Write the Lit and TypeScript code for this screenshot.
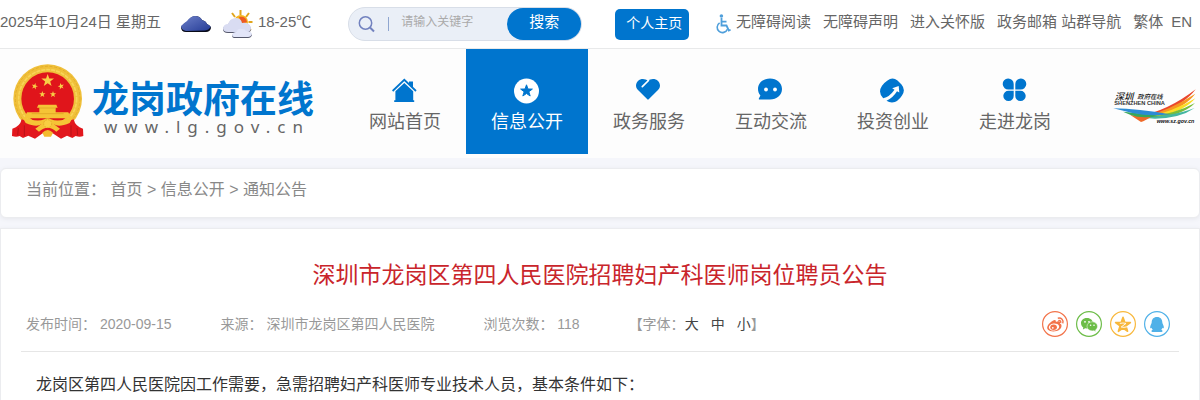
import { LitElement, html, svg, css } from "lit";
import { customElement, property } from "lit/decorators.js";

const STAR = "M0,-10 L2.4,-3.2 L9.5,-3.1 L3.8,1.2 L5.9,8.1 L0,4 L-5.9,8.1 L-3.8,1.2 L-9.5,-3.1 L-2.4,-3.2Z";

const NAV = [
  { label: "网站首页", icon: "home" },
  { label: "信息公开", icon: "star", active: true },
  { label: "政务服务", icon: "heart" },
  { label: "互动交流", icon: "chat" },
  { label: "投资创业", icon: "invest" },
  { label: "走进龙岗", icon: "clover" },
];

const NAV_ICONS: Record<string, unknown> = {
  home: svg`<path d="M.6 13 L12.3 1.8 L24 13" fill="none" stroke="#0075ce" stroke-width="1.8"/>
    <path d="M17 3.5h4v6.4l-4-3.8z M3.4 13.2 L12.3 4.9 L21.2 13.2 V22.2 H22.2 V24 H2.2 V22.2 H3.4Z" fill="#0075ce"/>`,
  star: svg`<circle cx="12.5" cy="13" r="12.5" fill="#fff"/>
    <path d=${STAR} transform="translate(12.5 13) scale(.62)" fill="#0075ce" stroke="#0075ce" stroke-width="1.6" stroke-linejoin="round"/>`,
  heart: svg`<path d="M11.9 2.9 C14.6 .3 19.3.2 22 2.9 C24.7 5.6 24.6 9.5 22 12.1 L12.7 21.3 Q12 22 11.3 21.3 L2 12.1 C-.6 9.5 -.7 5.6 2 2.9 C4.7.2 9.2.3 11.9 2.9Z" fill="#0075ce"/>
    <path d="M12.5 2.5 L6.3 8.6" stroke="#fff" stroke-width="1.7" stroke-linecap="round"/>`,
  chat: svg`<path d="M12 .5 C18.8 .5 24 4.9 24 11 C24 17.1 18.8 21.5 12 21.5 H1.6 Q.4 21.5 1 20.3 L2.4 17.5 C.8 15.7 0 13.5 0 11 C0 4.9 5.2 .5 12 .5Z" fill="#0075ce"/>
    <circle cx="8" cy="11.5" r="1.9" fill="#fff"/><circle cx="17" cy="11.5" r="1.9" fill="#fff"/>`,
  invest: svg`<path d="M7.5 2.5 Q12.5 -1.5 17.5 2.5 L21.5 6.5 Q26 12 22 17.5 Q18 24 12 24.5 Q9 24.5 6.5 22.7 Q13 19.7 17 13.2 L19.3 14.5 L18.7 8 L12.2 10.3 L14.5 11.7 Q9.4 19 3.2 20.2 Q-2.5 14.5 2 7.8 Q4 4.8 7.5 2.5Z" fill="#0075ce"/>`,
  clover: svg`<g fill="#0075ce"><path d="M11.7 11.5 H6.7 A5.5 5.5 0 1 1 11.7 6Z"/><path d="M13.3 11.5 H18.3 A5.5 5.5 0 1 0 13.3 6Z"/>
    <path d="M11.7 12.7 H6.7 A5.2 5.2 0 1 0 11.7 17.7Z"/><path d="M13.3 12.7 H18.3 A5.2 5.2 0 1 1 13.3 17.7Z"/></g>`,
};

const SHARES = [
  {
    name: "微博",
    color: "#f2734a",
    art: svg`<path d="M10.8 9.8 C12.6 8.2 14.4 8.8 13.8 11 C16.2 9.9 18.6 10.1 18 12.4 C20.2 13.2 20 16.5 17.6 18.6 C14.1 21.4 7.9 21.1 5.8 18.6 C4 16.3 6.4 12.5 10.8 9.8Z"/>
      <ellipse cx="12" cy="16" rx="5.2" ry="3.5" fill="#fff" transform="rotate(-8 12 16)"/>
      <ellipse cx="11.6" cy="16.2" rx="3.3" ry="2.7"/><circle cx="10.8" cy="16.8" r=".9" fill="#fff"/>
      <path d="M15.8 7.2 C19.4 6.4 21.8 9.2 20.8 12.4 M16.3 9.6 C18.2 9.2 19.2 10.3 18.6 12" fill="none" stroke="#f2734a" stroke-width="1.4"/>`,
  },
  {
    name: "微信",
    color: "#6dbd48",
    art: svg`<path d="M11 7 C6.7 7 5 9.7 5 12 C5 14.2 6 15.6 7.3 16.4 L6.9 18.4 L9.2 17.2 L11 17.4 C14.7 17.4 17 15 17 12.3 C17 9.5 14.6 7 11 7Z"/>
      <path d="M16.2 10.8 C13 10.8 11 12.9 11 15.3 C11 18 13.3 19.9 16.2 19.9 L18 19.7 L19.9 20.8 L19.5 19.1 C20.6 18.3 21.5 17 21.5 15.3 C21.5 12.8 19 10.8 16.2 10.8Z" stroke="#fff" stroke-width=".5"/>
      <g fill="#fff"><circle cx="9" cy="10.8" r=".9"/><circle cx="13" cy="10.8" r=".9"/><circle cx="14.6" cy="14.2" r=".8"/><circle cx="18" cy="14.2" r=".8"/></g>`,
  },
  {
    name: "QQ空间",
    color: "#f8b83c",
    art: svg`<path d=${STAR} transform="translate(13 14) scale(.78)" stroke="#f8b83c" stroke-width="2" stroke-linejoin="round"/>
      <path d="M9.8 12.4 Q13 11.6 16 12.4 L11.2 16 Q14 16.8 17 15.8" fill="none" stroke="#fff" stroke-width=".9"/>`,
  },
  {
    name: "QQ",
    color: "#50b1e8",
    art: svg`<path d="M13 6 C16.6 6 18.3 8.5 18.3 11.3 C18.3 12.4 19.5 14 19.8 15.8 C20 17.3 19.4 17.8 18.6 16.8 Q18.2 18 17.2 18.8 C19.2 19.6 18.9 21 17 21 H9 C7.1 21 6.8 19.6 8.8 18.8 Q7.8 18 7.4 16.8 C6.6 17.8 6 17.3 6.2 15.8 C6.5 14 7.7 12.4 7.7 11.3 C7.7 8.5 9.4 6 13 6Z"/>`,
  },
];

const base = css`
  * { box-sizing: border-box; }
  a { color: inherit; text-decoration: none; white-space: nowrap; }
  svg { display: block; flex: none; }
`;

@customElement("top-bar")
class TopBar extends LitElement {
  static styles = [base, css`
    :host { display: flex; align-items: center; height: 49px; padding-bottom: 4px; font-size: 15px; line-height: 24px; color: #666; background: #fff; border-bottom: 1px solid #e8e9ea; white-space: nowrap; }
    .weather { display: flex; align-items: center; margin-left: 19px; }
    .cloud { margin-top: 4px; }
    .sun { margin: 4px 4px 0 10px; }
    .search { display: flex; align-items: center; width: 234px; height: 34px; margin: 4px 33px 0 37px; border: 1px solid #d8dee8; border-radius: 17px; background: #eaeff7; }
    .search svg { margin-left: 8px; }
    .query { flex: 1; min-width: 0; margin: 0 0 4px; padding: 0 0 0 10px; border: 0; outline: 0; background: none; font: 400 12px/20px "Liberation Sans", "Noto Sans CJK SC", sans-serif; color: #666; }
    .query::placeholder { color: #aaa; opacity: 1; }
    .go { width: 74px; height: 32px; padding: 0 0 4px; border: 0; border-radius: 16px; background: #0075ce; color: #fff; font: 400 15px/20px "Liberation Sans", "Noto Sans CJK SC", sans-serif; }
    .mine { width: 74px; height: 31px; margin-top: 4px; padding-left: 4px; border-radius: 5px; background: #0075ce; color: #fff; font-size: 14px; line-height: 29px; text-align: center; }
    .links { display: flex; align-items: center; gap: 12px; margin-left: auto; padding-right: 8px; }
    .pair { display: flex; gap: 4px; }
    .langs { display: flex; align-items: baseline; gap: 8px; }
    .access { display: flex; align-items: center; gap: 5px; }
    .access svg { margin-top: 4px; }
  `];
  render() {
    return html`
      <span>2025年10月24日 星期五</span>
      <div class="weather">
        <svg class="cloud" width="32" height="18" viewBox="0 0 32 18">
          <defs><linearGradient id="n" x2="1" y2="1"><stop stop-color="#6d80c9"/><stop offset="1" stop-color="#253c96"/></linearGradient></defs>
          <path d="M6 17 Q1 17 1 12 Q4 8 7 7 Q11 1 15 1 Q20 1 22 5 Q26 6 27 9 Q31 11 31 13 Q30 17 26 17Z" fill="#080a18"/>
          <path d="M6 16 Q1 15 1 11 Q4 8 7 6 Q11 1 15 1 Q20 1 22 5 Q26 6 27 9 Q31 11 30.5 12 Q29 15 25 15.5Z" fill="url(#n)"/>
        </svg>
        <svg class="sun" width="32" height="28" viewBox="0 0 32 28">
          <g stroke="#e0a51d" stroke-width="2"><path d="M18.5 0v5M10 3l3 4M27 3l-3 4M30.5 12h-4M29 20l-4-3"/></g>
          <circle cx="19" cy="12" r="7" fill="#f6b51e"/><path d="M17 7 Q24 6 25 12 L20 14Z" fill="#ed5a23"/>
          <path d="M6 23 Q1 23 1 19 Q2 15 6 15 Q8 9 14 9 Q19 9 20 14 Q28 13 29 19 Q29 23 24 23Z" fill="#55586c"/>
          <path d="M6 22 Q1 22 1 18 Q2 14 6 14 Q8 8 14 8 Q19 8 20 13 Q28 12 29 18 Q29 22 24 22Z" fill="#d9dcf2"/>
          <path d="M12 28 Q9 27 11 24 Q13 23 14 23 Q16 19 20 20 Q23 20 24 22 Q29 22 30 25 Q29 28 26 28Z" fill="#55586c"/>
          <path d="M12 27 Q9 26 11 23 Q13 22 14 22 Q16 18 20 19 Q23 19 24 21 Q29 21 30 24 Q29 27 26 27Z" fill="#e2e5f8"/>
        </svg>
        <span>18-25℃</span>
      </div>
      <form class="search" @submit=${(e: Event) => e.preventDefault()}>
        <svg width="34" height="18" viewBox="0 0 34 18" fill="none" stroke="#7282bf">
          <circle cx="8.5" cy="8" r="6.2" stroke-width="1.5"/><path d="M13 12.5l4 4" stroke-width="2"/><path d="M31.5 2v14" stroke="#8fa6d0"/>
        </svg>
        <input class="query" type="text" aria-label="搜索关键字" placeholder="请输入关键字" />
        <button class="go" type="submit">搜索</button>
      </form>
      <a class="mine" href="#">个人主页</a>
      <nav class="links">
        <a class="access" href="#">
          <svg width="15" height="20" viewBox="0 0 15 20" fill="none" stroke="#4f9fdb" stroke-width="1.8">
            <circle cx="5.4" cy="2" r="1.8" fill="#4f9fdb" stroke="none"/><path d="M5.5 4v7.5h5l2.3 5 1.8-.8M5.5 7.6h5" /><path d="M3.6 8.8 A5.3 5.3 0 1 0 11.4 15.2" stroke-width="1.6"/>
          </svg>无障碍阅读</a>
        <a href="#">无障碍声明</a>
        <a href="#">进入关怀版</a>
        <span class="pair"><a href="#">政务邮箱</a><a href="#">站群导航</a></span>
        <span class="langs"><a href="#">繁体</a><a href="#">EN</a></span>
      </nav>`;
  }
}

@customElement("site-header")
class SiteHeader extends LitElement {
  static styles = [base, css`
    :host { display: flex; height: 109px; background: #fdfdfd; }
    .brand { display: flex; align-items: flex-start; width: 344px; padding: 11px 0 0 5px; flex: none; }
    .words { display: flex; flex-direction: column; margin-left: 2px; padding-top: 22px; }
    .name { font-size: 37px; font-weight: 700; line-height: 38px; color: #0075ce; white-space: nowrap; }
    .url { margin-left: 12px; font-family: "Noto Sans", sans-serif; font-size: 17px; line-height: 14px; letter-spacing: 7px; color: #666; }
    .nav { display: flex; flex: 0 1 732px; }
    .item { display: flex; flex: 1; flex-direction: column; align-items: center; height: 105px; padding-top: 29px; font-size: 18px; line-height: 26px; color: #666; }
    .item svg { margin-bottom: 4px; }
    .active { background: #0075ce; color: #fff; }
    .portal { margin: 26px 0 0 auto; }
    .portal text { font-family: "Liberation Sans", "Noto Sans CJK SC", sans-serif; }
  `];
  render() {
    return html`
      <a class="brand" href="#">
        <svg width="85" height="85" viewBox="0 0 255 255" role="img" aria-label="国徽">
          <circle cx="128" cy="116" r="103" fill="#f0c03a"/>
          <circle cx="128" cy="116" r="97" fill="none" stroke="#dba526" stroke-width="2" stroke-dasharray="9 5"/>
          <circle cx="128" cy="116" r="87" fill="none" stroke="#f8d458" stroke-width="5" stroke-dasharray="12 3"/>
          <circle cx="128" cy="116" r="79" fill="#e0151b"/>
          <g fill="#f8cf46"><path d=${STAR} transform="translate(128 62) scale(2)"/>
            <path d=${STAR} transform="translate(89 79) rotate(15)"/><path d=${STAR} transform="translate(168 79) rotate(-15)"/>
            <path d=${STAR} transform="translate(112 103)"/><path d=${STAR} transform="translate(144 103)"/></g>
          <path d="M100 134h54l4 9h-6v14h38l8 18H58l8-18h37v-14h-7z" fill="#f5c436"/>
          <path d="M102 144h50M80 161h96" stroke="#d99f20" stroke-width="2"/>
          <path d="M50 178 Q45 200 22 206 L21 228 Q34 232 44 228 L54 234 L70 227 L90 236 L113 220 H143 L168 236 L186 227 L202 234 L212 228 Q224 232 235 228 L234 206 Q211 200 206 178 Q170 190 128 190 Q86 190 50 178Z" fill="#e2171d"/>
          <path d="M50 168 Q92 189 118 178 Q128 172 138 178 Q164 189 206 168 L194 189 Q160 204 146 192 L165 206 L154 215 Q128 192 102 215 L91 206 L110 192 Q96 204 62 189Z" fill="#f5c436"/>
          <circle cx="128" cy="191" r="12" fill="#f8ce42" stroke="#d99f20" stroke-width="2" stroke-dasharray="5 3"/>
          <path d="M112 218q16-16 32 0l-6 12h-20z" fill="#f3bb2e"/>
          <path d="M40 204l-2 22M58 196v32M198 196v32M216 204l2 22" stroke="#b81218" stroke-width="3"/>
        </svg>
        <span class="words"><span class="name">龙岗政府在线</span><span class="url">www.lg.gov.cn</span></span>
      </a>
      <nav class="nav">
        ${NAV.map((n) => html`<a class="item ${n.active ? "active" : ""}" href="#">
          <svg width="26" height="27" viewBox="0 0 26 27">${NAV_ICONS[n.icon]}</svg>${n.label}</a>`)}
      </nav>
      <a class="portal" href="#">
        <svg width="100" height="60" viewBox="0 0 300 180" role="img" aria-label="深圳政府在线">
          <path d="M116 124 Q205 107 287 43 Q255 86 178 118 L120 134Z" fill="#e9472c"/>
          <path d="M120 130 Q215 103 286 56 Q258 94 185 120Z" fill="#f79722"/>
          <path d="M130 130 Q225 108 286 70 Q256 106 185 123Z" fill="#f9dd26"/>
          <path d="M130 130 Q225 117 285 84 Q252 118 180 128Z" fill="#77bd3c"/>
          <path d="M117 127 Q220 124 284 99 Q240 130 165 131Z" fill="#43b5a1"/>
          <path d="M91 120 Q121 124 160 122 Q135 137 123 141Z" fill="#ef6a29"/>
          <path d="M69 110 Q131 116 180 122 Q126 132 92 120Z" fill="#37a75b"/>
          <path d="M40 100 Q116 101 210 118 Q149 125 97 114Z" fill="#2c8bd5"/>
          <text x="44" y="74" font-size="28" font-style="italic" font-weight="500" fill="#171717">深圳</text>
          <text x="112" y="73" font-size="19" font-style="italic" font-weight="500" fill="#171717">政府在线</text>
          <text x="43" y="91" font-size="17" font-weight="700" fill="#333">SHENZHEN CHINA</text>
          <text x="170" y="144" font-size="16" font-weight="700" font-style="italic" fill="#111">www.sz.gov.cn</text>
        </svg>
      </a>`;
  }
}

@customElement("share-button")
class ShareButton extends LitElement {
  static styles = [base, css`
    :host { display: block; }
    .share { display: block; padding: 0; border: 0; background: none; }
  `];
  @property({ attribute: false }) item = SHARES[0];
  render() {
    return html`<button class="share" type="button" aria-label=${this.item.name}>
      <svg width="26" height="26" viewBox="0 0 26 26" fill=${this.item.color}>
        <circle cx="13" cy="13" r="12.4" fill="none" stroke=${this.item.color} stroke-width="1.2"/>${this.item.art}
      </svg></button>`;
  }
}

@customElement("app-root")
class AppRoot extends LitElement {
  static styles = [base, css`
    :host { display: block; height: 100vh; overflow: hidden; background: #f5f6fb; font-family: "Liberation Sans", "Noto Sans CJK SC", sans-serif; font-weight: 400; }
    .crumbs { margin-top: 10px; height: 50px; padding: 6px 25px; border: 1px solid #ebecef; border-radius: 6px; background: #fff; box-shadow: 0 1px 4px #e6e7ec; font-size: 16px; line-height: 30px; color: #888; white-space: nowrap; }
    .article { margin-top: 10px; padding: 28px 20px; border: 1px solid #ebecef; background: #fff; box-shadow: 0 1px 4px #e6e7ec; }
    .title { margin: 0; font-size: 23px; font-weight: 400; line-height: 36px; text-align: center; color: #c9252b; }
    .meta { display: flex; align-items: center; height: 59px; padding: 4px 9px 0 5px; border-bottom: 1px solid #e6e6e6; font-size: 14px; line-height: 20px; color: #999; white-space: nowrap; }
    .facts { display: flex; gap: 49px; }
    .sizes { display: flex; }
    .size { padding: 0; border: 0; background: none; font: inherit; color: #444; }
    .size + .size { margin-left: 12px; }
    .shares { display: flex; gap: 8px; margin-left: auto; }
    .text { margin: 20px 0 0 15px; font-size: 16px; line-height: 26px; color: #333; }
  `];
  render() {
    return html`
      <top-bar></top-bar>
      <site-header></site-header>
      <nav class="crumbs"><span>当前位置：</span> <a href="#">首页</a> &gt; <a href="#">信息公开</a> &gt; <a href="#">通知公告</a></nav>
      <main class="article">
        <h1 class="title">深圳市龙岗区第四人民医院招聘妇产科医师岗位聘员公告</h1>
        <div class="meta">
          <div class="facts">
            <span>发布时间： 2020-09-15</span>
            <span>来源： 深圳市龙岗区第四人民医院</span>
            <span>浏览次数： 118</span>
            <span class="sizes">【字体：<button class="size" type="button">大</button><button class="size" type="button">中</button><button class="size" type="button">小</button>】</span>
          </div>
          <div class="shares">${SHARES.map((s) => html`<share-button .item=${s}></share-button>`)}</div>
        </div>
        <p class="text">龙岗区第四人民医院因工作需要，急需招聘妇产科医师专业技术人员，基本条件如下：</p>
      </main>`;
  }
}
